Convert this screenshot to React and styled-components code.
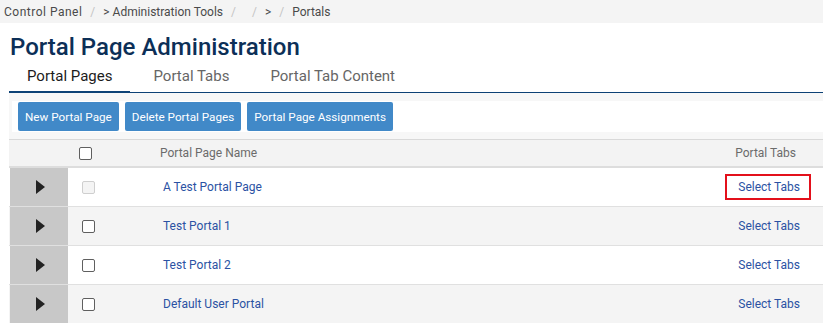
import React from "react";
import styled, { createGlobalStyle } from "styled-components";

const GlobalStyle = createGlobalStyle`
  body {
    margin: 0;
    background: #ffffff;
    font-family: Roboto, "Liberation Sans", Arial, sans-serif;
    overflow: hidden;
  }
`;

const crumbs = ["Control Panel", "> Administration Tools", "", ">", "Portals"];
const tabs = ["Portal Pages", "Portal Tabs", "Portal Tab Content"];
const pages = [
  { name: "A Test Portal Page", disabled: true, marked: true },
  { name: "Test Portal 1" },
  { name: "Test Portal 2" },
  { name: "Default User Portal" },
];

function App() {
  return (
    <Page>
      <GlobalStyle />
      <Breadcrumb>
        {crumbs.map((item, i) => (
          <React.Fragment key={i}>
            {i > 0 && <Slash>/</Slash>}
            <Crumb first={i === 0}>{item}</Crumb>
          </React.Fragment>
        ))}
      </Breadcrumb>
      <Content>
        <Title>Portal Page Administration</Title>
        <TabBar>
          {tabs.map((tab, i) => (
            <Tab key={tab} active={i === 0}>
              {tab}
            </Tab>
          ))}
        </TabBar>
        <Toolbar>
          <ButtonRow>
            <Button>New Portal Page</Button>
            <Button>Delete Portal Pages</Button>
            <Button>Portal Page Assignments</Button>
          </ButtonRow>
        </Toolbar>
        <Table>
          <HeaderRow>
            <Cell />
            <Cell>
              <Check header />
            </Cell>
            <NameHead>Portal Page Name</NameHead>
            <TabsHead>Portal Tabs</TabsHead>
          </HeaderRow>
          {pages.map((p, i) => (
            <Row key={p.name} odd={i % 2 === 1}>
              <Expander>
                <svg width="9" height="14" viewBox="0 0 9 14">
                  <path d="M0 0 L9 7 L0 14 Z" fill="#222" />
                </svg>
              </Expander>
              <Cell>
                <Check disabled={p.disabled} />
              </Cell>
              <NameCell>
                <Link href="#">{p.name}</Link>
              </NameCell>
              <TabsCell>
                <SelectLink href="#" marked={p.marked}>
                  Select Tabs
                </SelectLink>
              </TabsCell>
            </Row>
          ))}
        </Table>
      </Content>
    </Page>
  );
}

export default App;

const Page = styled.div`
  width: 823px;
`;

const Breadcrumb = styled.div`
  display: flex;
  align-items: center;
  height: 23px;
  background: #f4f4f4;
  padding-left: 4px;
  font-size: 12px;
  color: #4a4a4a;
`;

const Crumb = styled.span`
  white-space: pre;
  letter-spacing: ${(p) => (p.first ? "0.5px" : "0")};
`;

const Slash = styled.span`
  color: #c4c4c4;
  padding: 0 8px 0 8px;
`;

const Content = styled.div`
  padding-left: 9px;
`;

const Title = styled.h1`
  margin: 0;
  padding: 10px 0 0 1px;
  font-size: 24px;
  line-height: 28px;
  font-weight: 500;
  color: #0c2f57;
`;

const TabBar = styled.div`
  display: flex;
  gap: 5px;
  margin-top: 1px;
  border-bottom: 1px solid #0d4276;
`;

const Tab = styled.div`
  padding: 0 18px;
  height: 29px;
  line-height: 28px;
  font-size: 15px;
  color: ${(p) => (p.active ? "#1c1c1c" : "#666666")};
  border-bottom: 2px solid ${(p) => (p.active ? "#0d4276" : "transparent")};
  margin-bottom: -1px;
`;

const Toolbar = styled.div`
  background: #f7f7f7;
  padding: 8px 0 7px 3px;
`;

const ButtonRow = styled.div`
  display: flex;
  gap: 6px;
  background: #ffffff;
  padding: 1px 6px 0;
  height: 30px;
`;

const Button = styled.button`
  height: 29px;
  padding: 0 7px;
  border: none;
  border-radius: 2px;
  background: #4189c8;
  color: #ffffff;
  font-family: Roboto, "Liberation Sans", Arial, sans-serif;
  font-size: 11.7px;
`;

const Table = styled.div`
  border-top: 1px solid #d9d9d9;
`;

const HeaderRow = styled.div`
  display: grid;
  grid-template-columns: 59px 82px 1fr auto;
  height: 26px;
  align-items: center;
  background: #f3f3f3;
  border-bottom: 2px solid #dddddd;
  font-size: 12px;
  color: #6b6b6b;
`;

const Row = styled.div`
  display: grid;
  grid-template-columns: 59px 82px 1fr auto;
  height: 38px;
  align-items: center;
  background: ${(p) => (p.odd ? "#f4f4f4" : "#ffffff")};
  border-bottom: 1px solid #e0e0e0;
  font-size: 12px;
`;

const Cell = styled.div`
  display: flex;
  align-items: center;
  height: 100%;
`;

const Expander = styled.div`
  height: 100%;
  margin-left: 1px;
  background: #c8c8c8;
  display: flex;
  align-items: center;
  justify-content: center;
  svg {
    margin-left: 2px;
  }
`;

const Check = styled.span`
  display: inline-block;
  box-sizing: border-box;
  width: 13px;
  height: 13px;
  border-radius: 2px;
  margin-left: ${(p) => (p.header ? "11px" : "14px")};
  border: 1px solid ${(p) => (p.disabled ? "#cfcfcf" : "#5f5f5f")};
  background: ${(p) => (p.disabled ? "#f4f4f4" : "#ffffff")};
`;

const NameHead = styled.div`
  padding-left: 10px;
`;

const TabsHead = styled.div`
  padding-right: 27px;
`;

const NameCell = styled.div`
  padding-left: 13px;
`;

const TabsCell = styled.div`
  padding-right: 12px;
`;

const Link = styled.a`
  color: #2b52a3;
  text-decoration: none;
`;

const SelectLink = styled.a`
  display: inline-block;
  color: #2b52a3;
  text-decoration: none;
  line-height: 22px;
  padding: 0 9px 0 11px;
  border: 2px solid ${(p) => (p.marked ? "#e3101b" : "transparent")};
`;
